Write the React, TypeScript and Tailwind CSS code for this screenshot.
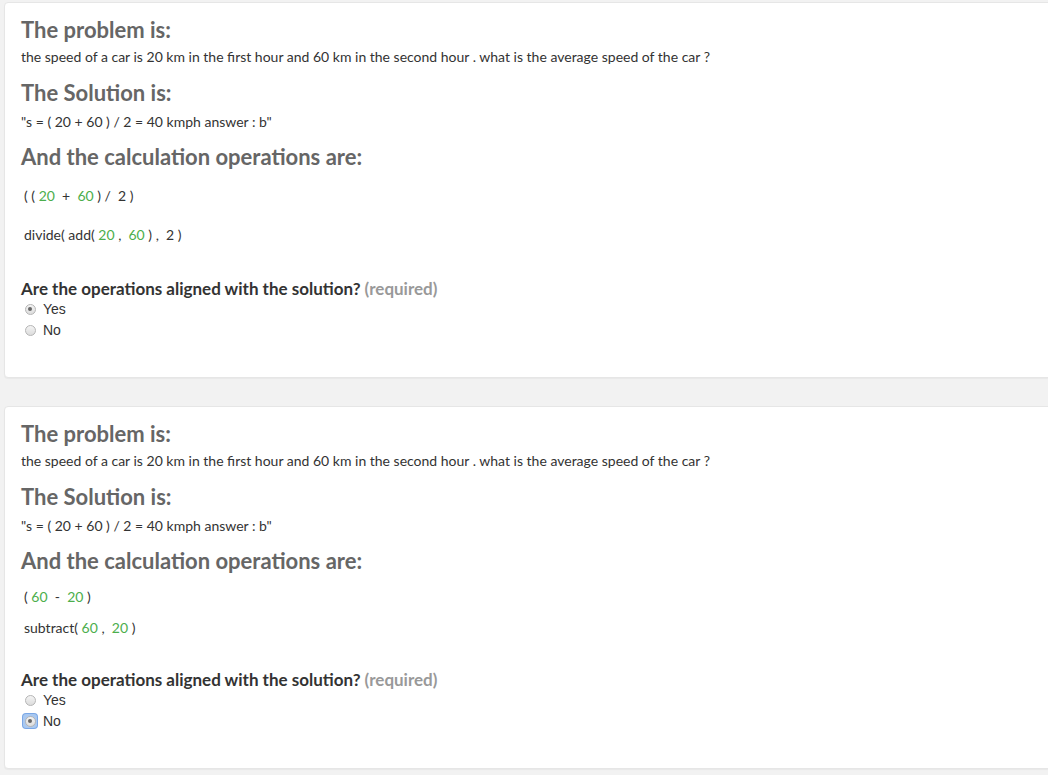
import React from 'react';

type Tok = { t: string; n?: boolean };

interface CardProps {
  expr: Tok[];
  fn: Tok[];
  selected: 'yes' | 'no';
  focused?: boolean;
  exprTop: string;
  fnTop: string;
  questionTop: string;
}

const problem =
  'the speed of a car is 20 km in the first hour and 60 km in the second hour . what is the average speed of the car ?';
const solution = '"s = ( 20 + 60 ) / 2 = 40 kmph answer : b"';

function Tokens({ items }: { items: Tok[] }) {
  return (
    <div className="whitespace-pre">
      {items.map((x, i) => (
        <span key={i} className={x.n ? 'text-[#4cae4c]' : ''}>
          {x.t}
        </span>
      ))}
    </div>
  );
}

function Radio({ label, checked, focused }: { label: string; checked: boolean; focused?: boolean }) {
  return (
    <label className="flex items-center h-[20px] font-['Liberation_Sans',sans-serif] text-[14px] text-[#333]">
      <span
        className={`flex items-center justify-center w-[14px] h-[14px] mr-[6px] rounded-[3px] ${
          focused ? 'bg-[#a9c8f0] ring-1 ring-[#7aa7e6]' : ''
        }`}
      >
        <span className="flex items-center justify-center w-[11px] h-[11px] rounded-full border border-[#b5b5b5] bg-gradient-to-b from-[#f4f4f4] to-[#dcdcdc]">
          {checked && <span className="w-[4px] h-[4px] rounded-full bg-[#666]" />}
        </span>
      </span>
      {label}
    </label>
  );
}

function Card({ expr, fn, selected, focused, exprTop, fnTop, questionTop }: CardProps) {
  return (
    <div className="bg-white rounded-[4px] border border-[#e6e6e6] shadow-[0_1px_1px_rgba(0,0,0,0.04)] ml-[4px] -mr-[4px] px-[16px] pt-[14px] pb-[37px]">
      <h2 className="text-[22px] leading-[26px] font-bold text-[#666]">The problem is:</h2>
      <p className="mt-[5px] text-[14px] leading-[18px] text-[#333]">{problem}</p>
      <h2 className="mt-[14px] text-[22px] leading-[26px] font-bold text-[#666]">The Solution is:</h2>
      <p className="mt-[7px] text-[14px] leading-[18px] text-[#333]">{solution}</p>
      <h2 className="mt-[13px] text-[22px] leading-[26px] font-bold text-[#666]">
        And the calculation operations are:
      </h2>
      <div className="pl-[3px] text-[14px] leading-[18px] text-[#333]">
        <div className={exprTop}>
          <Tokens items={expr} />
        </div>
        <div className={fnTop}>
          <Tokens items={fn} />
        </div>
      </div>
      <div className={questionTop}>
        <div className="text-[17px] leading-[20px] font-bold text-[#333]">
          Are the operations aligned with the solution? <span className="text-[#999]">(required)</span>
        </div>
        <div className="pl-[2px] flex flex-col gap-[1px]">
          <Radio label="Yes" checked={selected === 'yes'} />
          <Radio label="No" checked={selected === 'no'} focused={focused} />
        </div>
      </div>
    </div>
  );
}

export default function App() {
  return (
    <div className="min-h-[775px] bg-[#f2f2f2] pt-[2px] font-['Lato',sans-serif] overflow-hidden">
      <Card
        expr={[
          { t: '( ( ' },
          { t: '20', n: true },
          { t: '  +  ' },
          { t: '60', n: true },
          { t: ' ) /  2 )' },
        ]}
        fn={[
          { t: 'divide( add( ' },
          { t: '20', n: true },
          { t: ' ,  ' },
          { t: '60', n: true },
          { t: ' ) ,  2 )' },
        ]}
        selected="yes"
        exprTop="mt-[17px]"
        fnTop="mt-[21px]"
        questionTop="mt-[35px]"
      />
      <div className="h-[28px]" />
      <Card
        expr={[
          { t: '( ' },
          { t: '60', n: true },
          { t: '  -  ' },
          { t: '20', n: true },
          { t: ' )' },
        ]}
        fn={[
          { t: 'subtract( ' },
          { t: '60', n: true },
          { t: ' ,  ' },
          { t: '20', n: true },
          { t: ' )' },
        ]}
        selected="no"
        focused
        exprTop="mt-[14px]"
        fnTop="mt-[13px]"
        questionTop="mt-[33px]"
      />
    </div>
  );
}
